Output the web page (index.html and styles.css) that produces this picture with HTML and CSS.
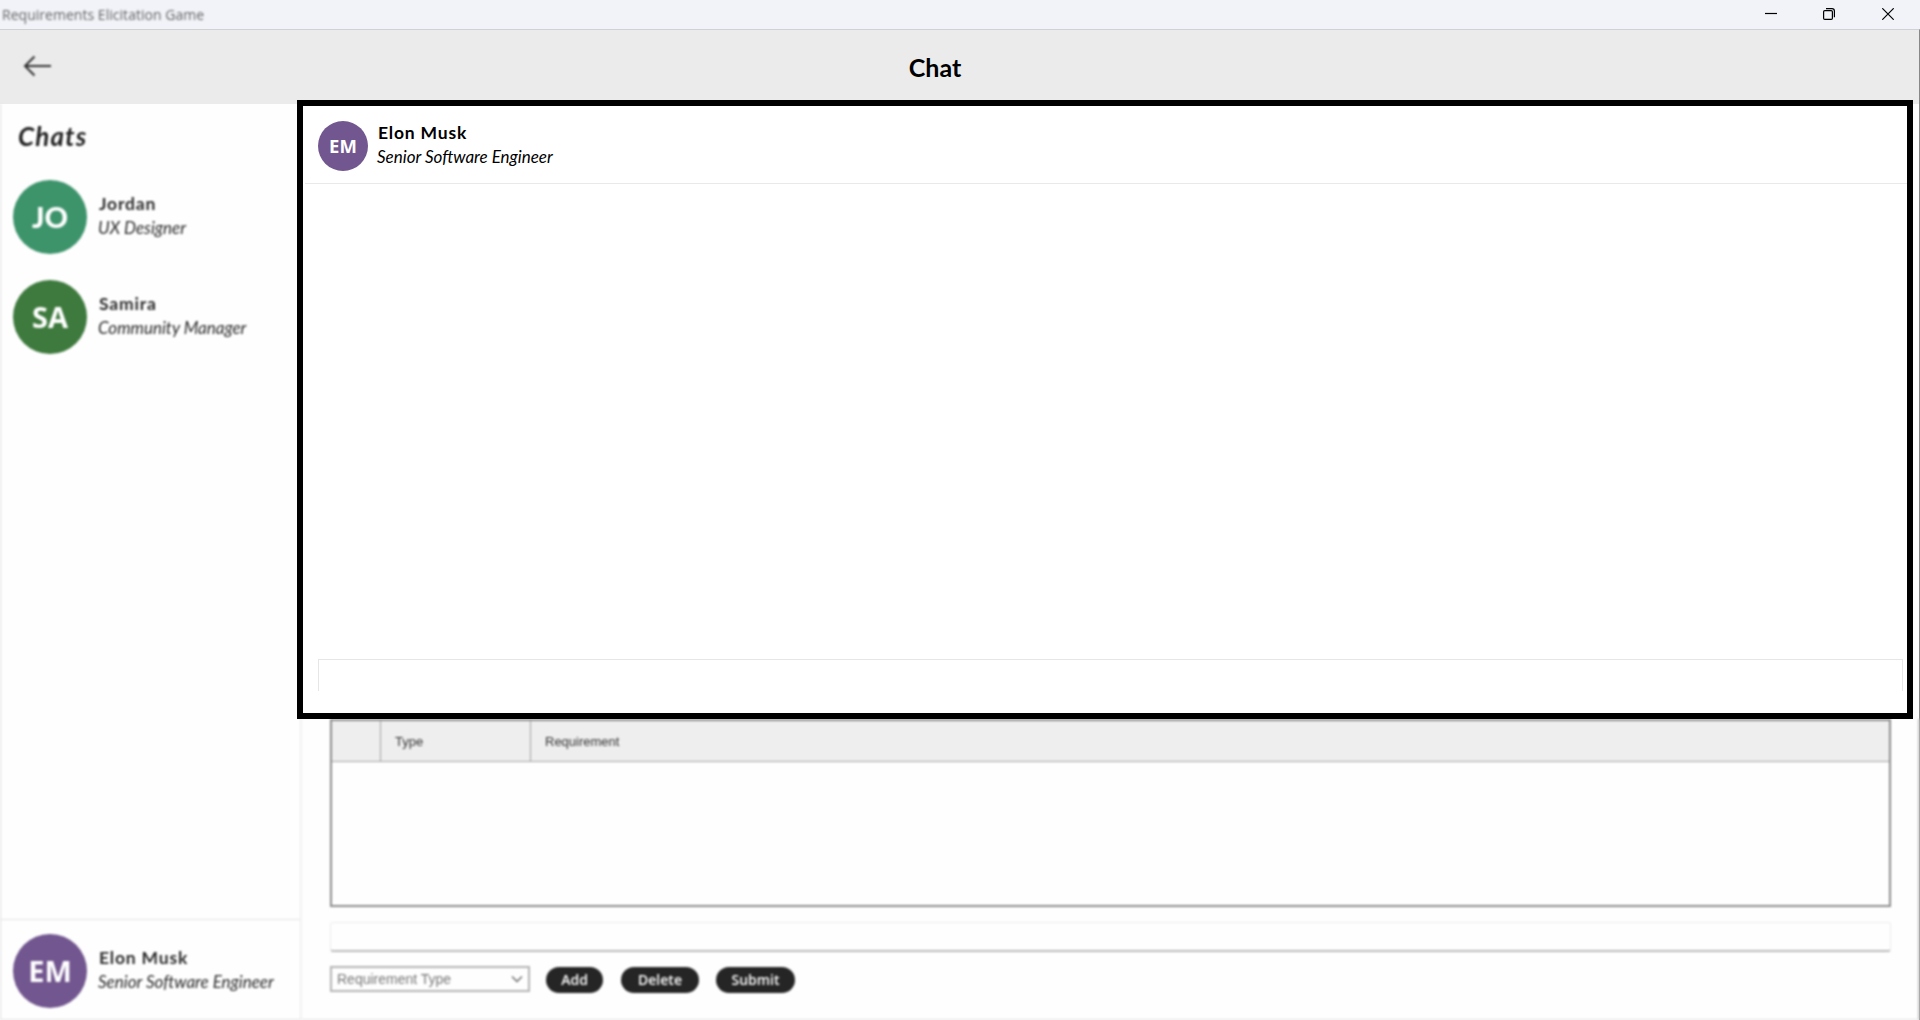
FILE: index.html
```
<!DOCTYPE html>
<html lang="en">
<head>
<meta charset="utf-8">
<title>Requirements Elicitation Game</title>
<link rel="stylesheet" href="styles.css">
</head>
<body>
<div class="window">
  <header class="titlebar">
    <span class="app-title soft">Requirements Elicitation Game</span>
    <div class="controls">
      <svg width="12" height="12" viewBox="0 0 12 12"><path d="M0 5.5H12"/></svg>
      <svg width="12" height="12" viewBox="0 0 12 12"><rect x=".6" y="2.6" width="8.8" height="8.8" rx="1.2"/><path d="M3 .6H9Q11.4 .6 11.4 3V9.3"/></svg>
      <svg width="12" height="12" viewBox="0 0 12 12"><path d="M.3 .3L11.7 11.7M11.7 .3L.3 11.7"/></svg>
    </div>
  </header>
  <div class="topbar">
    <svg class="back soft" width="30" height="24" viewBox="0 0 30 24"><path d="M28 12H2M11.5 2.5L2 12L11.5 21.500"/></svg>
    <h1>Chat</h1>
  </div>
  <div class="body">
    <aside class="sidebar soft">
      <h2>Chats</h2>
      <div class="contact">
        <div class="avatar green jo">JO</div>
        <div class="who"><b>Jordan</b><i>UX Designer</i></div>
      </div>
      <div class="contact">
        <div class="avatar forest">SA</div>
        <div class="who"><b>Samira</b><i>Community Manager</i></div>
      </div>
      <div class="contact me">
        <div class="avatar purple">EM</div>
        <div class="who"><b>Elon Musk</b><i>Senior Software Engineer</i></div>
      </div>
    </aside>
    <main class="main">
      <section class="chat">
        <div class="chat-head">
          <div class="avatar small purple">EM</div>
          <div class="who"><b>Elon Musk</b><i>Senior Software Engineer</i></div>
        </div>
        <div class="messages"></div>
        <div class="message-input"></div>
      </section>
      <section class="requirements soft">
        <div class="table">
          <div class="row"><span></span><span>Type</span><span>Requirement</span></div>
        </div>
        <div class="field"></div>
        <div class="actions">
          <div class="select"><span>Requirement Type</span><svg width="12" height="8" viewBox="0 0 12 8"><path d="M1 1.500L6 6.500L11 1.500"/></svg></div>
          <button class="add">Add</button>
          <button class="delete">Delete</button>
          <button class="submit">Submit</button>
        </div>
      </section>
    </main>
  </div>
</div>
</body>
</html>
```
FILE: styles.css
```
* { box-sizing: border-box; }
body { margin: 0; background: #fefefe; font-family: "Lato", sans-serif; color: #000; }
h1, h2 { margin: 0; }
svg { fill: none; stroke: #000; display: block; }

.window { width: 1920px; height: 1020px; overflow: hidden; display: flex; flex-direction: column; }
.soft { filter: blur(1.250px); }

.titlebar { height: 29px; background: #f1f3f8; display: flex; justify-content: space-between; }
.app-title { font: 14px/29px "Open Sans", sans-serif; letter-spacing: .03px; color: #666; padding-left: 2px; }
.controls { display: flex; gap: 47px; padding: 8px 26px 0 0; }
.controls svg { stroke-width: 1.2; }
.controls svg:first-child { margin-right: -1px; }

.topbar { height: 75px; background: #ebebeb; border-top: 1px solid #d0d1d3; border-right: 1px solid #888; display: flex; justify-content: center; position: relative; }
.topbar h1 { font-size: 25px; line-height: 74px; margin-right: 49px; }
.back { position: absolute; left: 23px; top: 24px; stroke: #333; stroke-width: 2; }

.body { flex: 1; display: flex; min-height: 0; }

.sidebar { width: 301px; border-left: 1px solid #ddd; border-right: 1px solid #eee; border-bottom: 1px solid #e2e2e2; display: flex; flex-direction: column; }
.sidebar h2 { font: italic bold 26px/30px "Lato", sans-serif; letter-spacing: 1.100px; color: #222; padding: 17px 0 0 17px; height: 63px; }
.contact { height: 100px; display: flex; gap: 11px; padding: 13px 0 0 12px; flex-shrink: 0; }
.contact.me { margin-top: auto; border-top: 1px solid #e4e4e4; height: 100px; padding-top: 14px; }

.avatar { width: 74px; height: 74px; border-radius: 50%; color: #fff; font: bold 29px/73px "Open Sans", sans-serif; text-align: center; flex-shrink: 0; }
.avatar.small { width: 50px; height: 50px; font-size: 18.500px; line-height: 50px; }
.avatar.jo { font-family: "Lato", sans-serif; font-weight: 900; }
.green { background: #3d946b; }
.forest { background: #3e7a3e; }
.purple { background: #72568f; }

.who { display: flex; flex-direction: column; font-size: 17px; line-height: 24px; white-space: nowrap; padding-top: 12px; }
.who b { font-size: 17.500px; letter-spacing: .8px; padding-left: 1px; }
.sidebar .who { color: #2a2a2a; }

.main { flex: 1; display: flex; flex-direction: column; border-right: 1px solid #888; }

.chat { height: 619px; margin: -4px 6px 0 -4px; border: 6px solid #000; background: #fff; position: relative; z-index: 1; display: flex; flex-direction: column; }
.chat-head { height: 78px; margin-left: 2px; border-bottom: 1px solid #e9e9e9; display: flex; gap: 10px; padding: 15px 0 0 13px; }
.chat-head .who { padding-top: 0; margin-left: -1px; }
.messages { flex: 1; }
.message-input { height: 32px; margin: 0 4px 22px 15px; border: solid #e6e6e6; border-width: 1px 1px 0; }

.requirements { flex: 1; margin-right: -1px; border-bottom: 1px solid #e2e2e2; border-right: 2px solid #c4c4c4; border-left: 1px solid #f4f4f4; padding: 0 27px 0 28px; }
.table { height: 188px; border: 2px solid #8c8c8c; }
.row { display: grid; grid-template-columns: 49px 150px 1fr; height: 41px; background: #eee; border-bottom: 1px solid #a4a4a4; font: 13px/41px "Liberation Sans", sans-serif; color: #333; }
.row span { border-right: 1px solid #a4a4a4; padding-left: 14px; }
.row span:last-child { border: 0; }
.field { height: 30px; margin-top: 15px; border: 1px solid #eee; border-bottom: 2px solid #bbb; border-radius: 3px; }
.actions { display: flex; margin-top: 15px; }
.select { width: 200px; height: 26px; border: 2px solid #b4b4b4; display: flex; justify-content: space-between; align-items: center; padding: 0 5px; font: 14px/22px "Liberation Sans", sans-serif; color: #777; margin: -1px 16px 0 0; }
.select svg { stroke: #666; stroke-width: 1.300; }
button { border: 0; height: 26px; border-radius: 13px; background: #252525; color: #fff; font: 600 14px/26px "Open Sans", sans-serif; padding: 0; text-align: center; }
.add { width: 57px; margin-right: 18px; }
.delete { width: 78px; margin-right: 17px; }
.submit { width: 79px; }
```
